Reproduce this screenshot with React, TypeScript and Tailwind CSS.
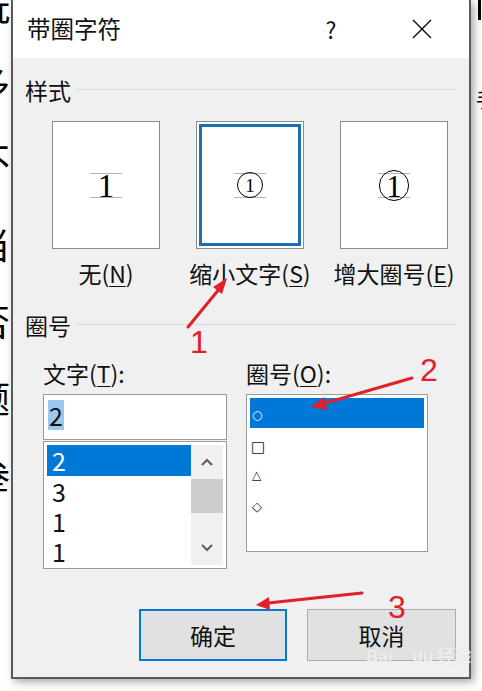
import React from 'react';

const cjk = { fontFamily: '"Noto Sans CJK SC", "Noto Sans", sans-serif' };
const serif = { fontFamily: '"Liberation Serif", "DejaVu Serif", serif' };

const Mn: React.FC<{ c: string }> = ({ c }) => <span className="underline underline-offset-[3px] decoration-1">{c}</span>;

const GuideLines: React.FC<{ children: React.ReactNode }> = ({ children }) => (
    <div className="w-[32px] h-[25px] border-y border-[#b4b4b4] flex items-center justify-center">{children}</div>
);

const PreviewBox: React.FC<{ selected?: boolean; children: React.ReactNode; label: React.ReactNode }> = ({ selected, children, label }) => (
    <div className="w-[108px] flex flex-col items-center">
        <div className="w-[108px] h-[128px] border border-[#8c8c8c] bg-white p-[2px]">
            <div className={`w-full h-full flex items-center justify-center ${selected ? 'border-[3px] border-[#1c6fb3]' : ''}`}>
                {children}
            </div>
        </div>
        <div className="mt-[11px] text-[23px] leading-[26px] whitespace-nowrap text-[#111]">{label}</div>
    </div>
);

const SectionHeader: React.FC<{ text: string }> = ({ text }) => (
    <div className="flex items-center pl-[12px] pr-[13px] h-[26px]">
        <span className="text-[23px] leading-[26px] text-[#111]">{text}</span>
        <div className="flex-1 h-px bg-[#d9d9d9] ml-[5px] -mt-[2px]"></div>
    </div>
);

const Chevron: React.FC<{ up?: boolean }> = ({ up }) => (
    <svg width="12" height="8" viewBox="0 0 12 8">
        <polyline points={up ? '1,7 6,2 11,7' : '1,1 6,6 11,1'} fill="none" stroke="#606060" strokeWidth="2.2" />
    </svg>
);

const App: React.FC = () => {
    const leftChars = ['玩', '多', '不'];
    const leftChars2 = ['当', '否', '题', '叁'];

    return (
        <div className="w-[482px] h-[691px] bg-white flex overflow-hidden relative" style={cjk}>
            {/* Document behind the dialog - left edge */}
            <div className="w-[11px] h-full overflow-hidden shrink-0">
                <div className="ml-[-26px] text-[36px] leading-[77px] text-black">
                    <div className="-mt-[33px]">
                        {leftChars.map((c, i) => <div key={i}>{c}</div>)}
                    </div>
                    <div className="mt-[7px]">
                        {leftChars2.map((c, i) => <div key={i}>{c}</div>)}
                    </div>
                </div>
            </div>

            {/* Dialog */}
            <div className="w-[460px] h-[679px] shrink-0 bg-[#f0f0f0] border-x-2 border-b-2 border-[#5a5a5a] flex flex-col shadow-[3px_3px_8px_rgba(0,0,0,0.35)] relative z-10">
                {/* Title bar */}
                <div className="h-[58px] bg-white flex items-center pl-[14px] pr-[24px] shrink-0">
                    <span className="text-[23.5px] text-[#111] leading-none">带圈字符</span>
                    <span className="ml-auto w-[46px] text-center text-[23px] leading-none text-[#111]">?</span>
                    <div className="ml-[45px] w-[46px] flex items-center justify-center">
                        <svg width="20" height="20" viewBox="0 0 20 20">
                            <line x1="1" y1="1" x2="19" y2="19" stroke="#111" strokeWidth="1.4" />
                            <line x1="19" y1="1" x2="1" y2="19" stroke="#111" strokeWidth="1.4" />
                        </svg>
                    </div>
                </div>

                {/* Style section */}
                <div className="mt-[19px]">
                    <SectionHeader text="样式" />
                </div>
                <div className="mt-[18px] pl-[39px] flex gap-[36px]">
                    <PreviewBox label={<>无(<Mn c="N" />)</>}>
                        <GuideLines>
                            <span className="text-[33px] leading-none mt-[3px] text-black" style={serif}>1</span>
                        </GuideLines>
                    </PreviewBox>
                    <PreviewBox selected label={<>缩小文字(<Mn c="S" />)</>}>
                        <GuideLines>
                            <div className="w-[26px] h-[26px] rounded-full border border-black flex items-center justify-center shrink-0">
                                <span className="text-[19px] leading-none text-black" style={serif}>1</span>
                            </div>
                        </GuideLines>
                    </PreviewBox>
                    <PreviewBox label={<>增大圈号(<Mn c="E" />)</>}>
                        <GuideLines>
                            <div className="w-[30px] h-[31px] rounded-full border border-black flex items-center justify-center shrink-0">
                                <span className="text-[31px] leading-none mt-[2px] text-black" style={serif}>1</span>
                            </div>
                        </GuideLines>
                    </PreviewBox>
                </div>

                {/* Enclosure section */}
                <div className="mt-[26px]">
                    <SectionHeader text="圈号" />
                </div>
                <div className="mt-[22px] pl-[30px] flex gap-[19px]">
                    {/* Text column */}
                    <div className="w-[184px] flex flex-col">
                        <div className="text-[23px] leading-[26px] text-[#111]">文字(<Mn c="T" />):</div>
                        <div className="mt-[8px] h-[46px] border border-[#9a9a9a] bg-white pl-[4px] pt-[5px]">
                            <span className="inline-block bg-[#99c9ef] text-[25px] leading-[30px] px-[1px] text-[#111]">2</span>
                        </div>
                        <div className="mt-px h-[128px] border border-[#9a9a9a] bg-white p-[3px] flex overflow-hidden">
                            <div className="flex-1 flex flex-col text-[25px] text-[#111]">
                                <div className="h-[31px] bg-[#0078d7] text-white pl-[5px] leading-[31px]">2</div>
                                <div className="h-[30px] pl-[5px] leading-[30px]">3</div>
                                <div className="h-[30px] pl-[5px] leading-[30px]">1</div>
                                <div className="h-[30px] pl-[5px] leading-[30px]">1</div>
                            </div>
                            <div className="w-[32px] bg-[#f0f0f0] flex flex-col">
                                <div className="h-[34px] flex items-center justify-center"><Chevron up /></div>
                                <div className="h-[34px] bg-[#cdcdcd]"></div>
                                <div className="flex-1"></div>
                                <div className="h-[34px] flex items-center justify-center"><Chevron /></div>
                            </div>
                        </div>
                    </div>

                    {/* Enclosure column */}
                    <div className="w-[182px] flex flex-col">
                        <div className="text-[23px] leading-[26px] text-[#111]">圈号(<Mn c="O" />):</div>
                        <div className="mt-[8px] h-[158px] border border-[#9a9a9a] bg-white p-[3px] flex flex-col" style={{ fontFamily: '"DejaVu Sans", sans-serif' }}>
                            <div className="h-[30px] bg-[#0078d7] text-white pl-[2px] flex items-center pt-[3px] text-[12px]">○</div>
                            <div className="h-[30px] pl-[1px] flex items-center pt-[8px] text-[15px] text-[#111]">□</div>
                            <div className="h-[30px] pl-[2px] flex items-center pt-[3px] text-[12px] text-[#111]">△</div>
                            <div className="h-[30px] pl-[2px] flex items-center pt-[7px] text-[13px] text-[#111]">◇</div>
                        </div>
                    </div>
                </div>

                {/* Buttons */}
                <div className="mt-[40px] flex justify-end gap-[20px] pr-[13px]">
                    <button className="w-[148px] h-[52px] bg-[#e1e1e1] border-2 border-[#0078d7] text-[23px] text-[#111]">确定</button>
                    <button className="w-[149px] h-[52px] bg-[#e1e1e1] border border-[#adadad] text-[23px] text-[#111]">取消</button>
                </div>
            </div>

            {/* Document behind the dialog - right edge */}
            <div className="flex-1 h-full overflow-hidden">
                <div className="ml-[5px] text-black">
                    <div className="h-[20px] w-[3px] bg-black ml-[2px]"></div>
                    <div className="text-[20px] leading-[30px] mt-[65px]">手,</div>
                </div>
            </div>

            {/* Watermark */}
            <div className="absolute left-[366px] top-[646px] z-20 text-[17px] leading-none text-white/75 font-bold [text-shadow:0_0_1px_rgba(0,0,0,0.15)] pointer-events-none" style={{ fontFamily: '"Liberation Sans", sans-serif' }}>
                Bai<span className="ml-[20px]">du</span><span className="ml-[4px]" style={cjk}>经验</span>
            </div>

            {/* Red annotations */}
            <svg className="absolute inset-0 z-30 pointer-events-none" width="482" height="691" viewBox="0 0 482 691">
                <g stroke="#e0202a" strokeWidth="3" fill="#e0202a" strokeLinecap="round">
                    <line x1="188" y1="327" x2="220" y2="288" />
                    <polygon points="227,278 213,287 222,294" stroke="none" />
                    <line x1="412" y1="378" x2="322" y2="404" />
                    <polygon points="311,407 324,397 327,410" stroke="none" />
                    <line x1="362" y1="593" x2="268" y2="603" />
                    <polygon points="256,605 269,597 270,610" stroke="none" />
                </g>
            </svg>
            <div className="absolute left-[190px] top-[326px] z-30 text-[32px] leading-none text-[#e0202a] pointer-events-none" style={{ fontFamily: '"Liberation Sans", sans-serif' }}>1</div>
            <div className="absolute left-[420px] top-[354px] z-30 text-[32px] leading-none text-[#e0202a] pointer-events-none" style={{ fontFamily: '"Liberation Sans", sans-serif' }}>2</div>
            <div className="absolute left-[388px] top-[591px] z-30 text-[32px] leading-none text-[#e0202a] pointer-events-none" style={{ fontFamily: '"Liberation Sans", sans-serif' }}>3</div>
        </div>
    );
};

export default App;
